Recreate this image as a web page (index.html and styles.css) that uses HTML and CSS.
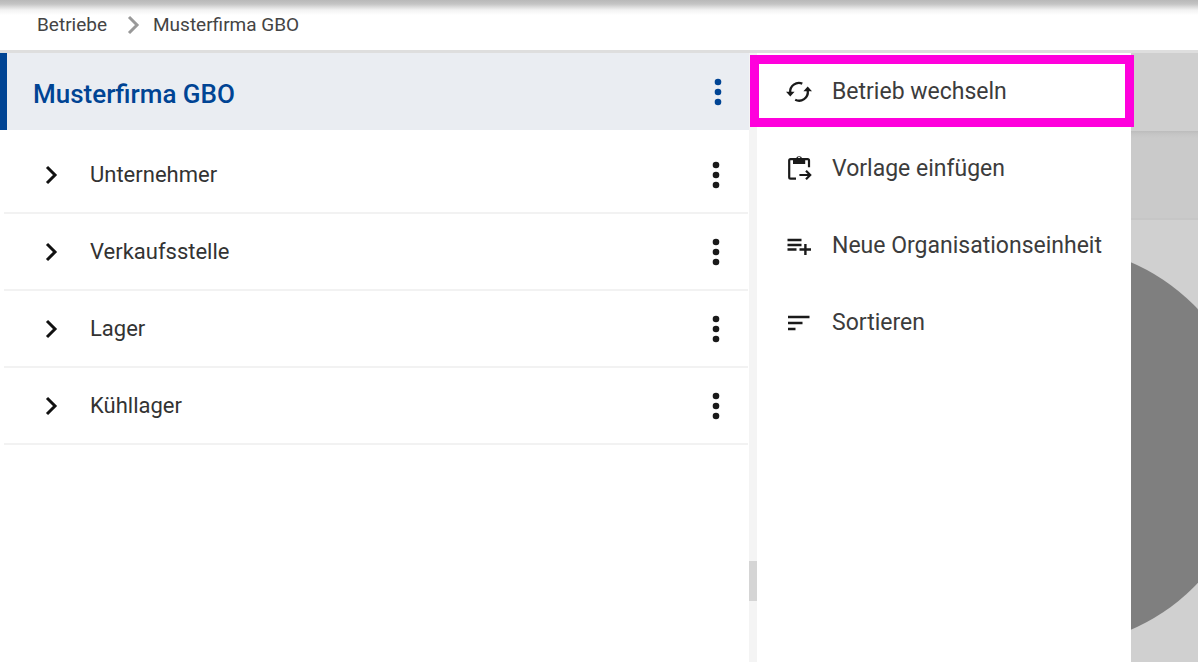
FILE: index.html
```html
<!DOCTYPE html>
<html lang="de">
<head>
<meta charset="utf-8">
<meta name="viewport" content="width=device-width, initial-scale=1">
<title>Betriebe – Musterfirma GBO</title>
<link rel="stylesheet" href="styles.css">
</head>
<body>
<svg class="sprite" aria-hidden="true">
  <symbol id="dots" viewBox="0 0 8 28"><circle cx="4" cy="4" r="3.3"/><circle cx="4" cy="14" r="3.3"/><circle cx="4" cy="24" r="3.3"/></symbol>
  <symbol id="chevron" viewBox="0 0 14 20"><path d="M2 2l8 8-8 8" fill="none" stroke="currentColor" stroke-width="3"/></symbol>
</svg>
<header class="topbar">
  <nav class="crumbs" aria-label="Breadcrumb">
    <a class="crumb" href="#betriebe">Betriebe</a>
    <svg class="crumb-sep" aria-hidden="true"><use href="#chevron"/></svg>
    <a class="crumb" href="#musterfirma" aria-current="page">Musterfirma GBO</a>
  </nav>
</header>
<main class="workspace">
  <section class="tree">
    <div class="tree-head">
      <h1 class="tree-title">Musterfirma GBO</h1>
      <button class="more" type="button" aria-label="Aktionen Musterfirma GBO"><svg class="dots"><use href="#dots"/></svg></button>
    </div>
    <ul class="tree-list">
      <li class="row"><button class="node" type="button"><svg class="chevron"><use href="#chevron"/></svg>Unternehmer</button><button class="more" type="button" aria-label="Aktionen Unternehmer"><svg class="dots"><use href="#dots"/></svg></button></li>
      <li class="row"><button class="node" type="button"><svg class="chevron"><use href="#chevron"/></svg>Verkaufsstelle</button><button class="more" type="button" aria-label="Aktionen Verkaufsstelle"><svg class="dots"><use href="#dots"/></svg></button></li>
      <li class="row"><button class="node" type="button"><svg class="chevron"><use href="#chevron"/></svg>Lager</button><button class="more" type="button" aria-label="Aktionen Lager"><svg class="dots"><use href="#dots"/></svg></button></li>
      <li class="row"><button class="node" type="button"><svg class="chevron"><use href="#chevron"/></svg>Kühllager</button><button class="more" type="button" aria-label="Aktionen Kühllager"><svg class="dots"><use href="#dots"/></svg></button></li>
    </ul>
  </section>
  <div class="splitter"><span class="grip"></span></div>
  <section class="detail">
    <div class="band-head"></div>
    <div class="band-tabs"></div>
    <div class="canvas"><div class="disc"></div></div>
    <div class="menu">
      <button class="item" type="button">
        <svg class="icon" viewBox="0 0 28 28" fill="none" stroke="currentColor" stroke-width="2.3"><path d="M17.3 5.6A8.8 8.8 0 0 0 5.2 14.4M10.2 21.8A8.8 8.8 0 0 0 22.8 13"/><path d="M1 13.8h8.6L5.3 18.4zM18.4 13.2h8.6l-4.3-4.6z" fill="currentColor" stroke="none"/></svg>
        Betrieb wechseln</button>
      <button class="item" type="button">
        <svg class="icon" viewBox="0 0 28 28" fill="none" stroke="currentColor" stroke-width="2.2"><path d="M11 23.6H5.6a1.4 1.4 0 0 1-1.4-1.4V5.6a1.4 1.4 0 0 1 1.4-1.4h17a1.4 1.4 0 0 1 1.4 1.4v6.6M14.4 20H25M21 15.8l4.2 4.2-4.2 4.2"/><path d="M8 3.6h3a3.2 3.2 0 0 1 6.2 0h3v5.4H8zm6.1-1.5a1.4 1.4 0 1 0 0 2.8 1.4 1.4 0 0 0 0-2.8z" fill="currentColor" stroke="none" fill-rule="evenodd"/></svg>
        Vorlage einfügen</button>
      <button class="item" type="button">
        <svg class="icon" viewBox="0 0 28 28" fill="none" stroke="currentColor" stroke-width="2.4"><path d="M2.5 8h14M2.5 13h14M2.5 17.5h9M14.5 17.5h11.5M20.4 12v11"/></svg>
        Neue Organisationseinheit</button>
      <button class="item" type="button">
        <svg class="icon" viewBox="0 0 28 28" fill="none" stroke="currentColor" stroke-width="2.4"><path d="M3 8h21.5M3 14h14.5M3 20h7.5"/></svg>
        Sortieren</button>
      <div class="highlight"></div>
    </div>
  </section>
</main>
</body>
</html>
```

FILE: styles.css
```css
* {
  box-sizing: border-box;
}

body {
  margin: 0;
  min-height: 100vh;
  display: flex;
  flex-direction: column;
  background: #fff;
  color: #3c3c3c;
  font-family: Roboto, "Liberation Sans", sans-serif;
  font-size: 23px;
  line-height: 32px;
}

button {
  border: 0;
  padding: 0;
  background: none;
  color: inherit;
  font: inherit;
  text-align: left;
  cursor: pointer;
}

.sprite {
  position: absolute;
  width: 0;
  height: 0;
}

.topbar {
  padding: 9px 37px;
  border-bottom: 3px solid #dedede;
  background: linear-gradient(#b8b8b8, #c4c4c4 4px, #f2f2f2 10px, #fff 15px);
}

.crumbs {
  display: flex;
  align-items: center;
  gap: 12px;
  font-size: 19px;
}

.crumb {
  color: #444;
  text-decoration: none;
}

.crumb-sep {
  width: 14px;
  height: 20px;
  margin-left: 8px;
  color: #999;
}

.workspace {
  flex: 1;
  display: grid;
  grid-template-columns: minmax(0, 749fr) 8px minmax(0, 441fr);
}

.tree-head {
  display: flex;
  align-items: center;
  justify-content: space-between;
  min-height: 77px;
  padding: 0 27px 0 26px;
  border-left: 7px solid #004494;
  background: #eaedf2;
  color: #004494;
}

.tree-title {
  margin: 0;
  padding-top: 4px;
  font-size: 26px;
  font-weight: 500;
}

.more {
  display: flex;
}

.dots {
  width: 8px;
  height: 28px;
  fill: currentColor;
}

.tree-list {
  margin: 0;
  padding: 7px 1px 0 4px;
  list-style: none;
}

.row {
  display: flex;
  align-items: center;
  min-height: 77px;
  padding: 0 28px 0 41px;
  border-bottom: 2px solid #f2f2f2;
  color: #1a1a1a;
  font-size: 22px;
}

.node {
  flex: 1;
  display: flex;
  align-items: center;
  gap: 31px;
  color: #333;
}

.chevron {
  width: 14px;
  height: 20px;
  color: #111;
}

.splitter {
  display: flex;
  justify-content: center;
  align-items: flex-end;
  padding-bottom: 61px;
  background: #f4f4f4;
}

.grip {
  width: 8px;
  height: 40px;
  background: #d5d5d5;
}

.detail {
  position: relative;
  display: flex;
  flex-direction: column;
}

.band-head {
  height: 78px;
  background: #cfcfcf;
}

.band-tabs {
  height: 89px;
  border-bottom: 2px solid #c6c6c6;
  background: linear-gradient(#bcbcbc, #c5c5c5 3px, #cacaca 7px);
}

.canvas {
  flex: 1;
  display: flex;
  align-items: center;
  padding: 10px 0 0 95px;
  overflow: hidden;
  background: #d0d0d0;
}

.disc {
  flex: none;
  width: 400px;
  height: 400px;
  border-radius: 50%;
  background: #7f7f7f;
}

/* Context menu laid over the dimmed detail pane */
.menu {
  position: absolute;
  inset: 0 auto 0 0;
  width: 374px;
  display: flex;
  flex-direction: column;
  background: #fff;
}

.item {
  display: flex;
  align-items: center;
  gap: 19px;
  min-height: 77px;
  padding-left: 28px;
  white-space: nowrap;
}

.icon {
  flex: none;
  width: 28px;
  height: 28px;
  color: #1a1a1a;
}

.highlight {
  position: absolute;
  top: 2px;
  left: -7px;
  right: -3px;
  height: 72px;
  border: 9px solid #ff00dc;
  pointer-events: none;
}
```
